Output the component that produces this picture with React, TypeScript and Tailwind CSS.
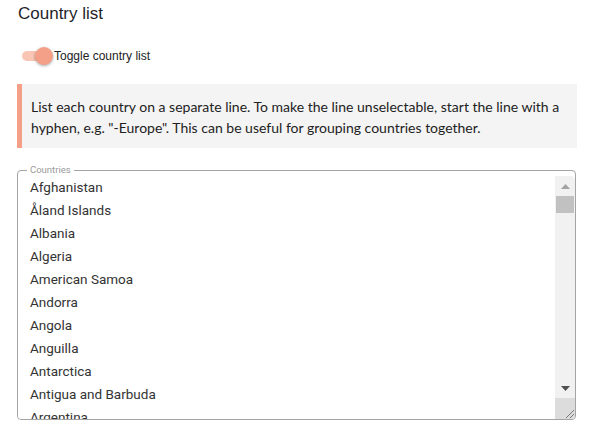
import { useState } from "react";

const COUNTRIES = [
  "Afghanistan", "Åland Islands", "Albania", "Algeria", "American Samoa", "Andorra", "Angola", "Anguilla",
  "Antarctica", "Antigua and Barbuda", "Argentina", "Armenia", "Aruba", "Australia", "Austria", "Azerbaijan",
  "Bahamas", "Bahrain", "Bangladesh", "Barbados", "Belarus", "Belgium", "Belize", "Benin", "Bermuda", "Bhutan",
  "Bolivia", "Bonaire, Sint Eustatius and Saba", "Bosnia and Herzegovina", "Botswana", "Bouvet Island", "Brazil",
  "British Indian Ocean Territory", "Brunei Darussalam", "Bulgaria", "Burkina Faso", "Burundi", "Cabo Verde",
  "Cambodia", "Cameroon", "Canada", "Cayman Islands", "Central African Republic", "Chad", "Chile", "China",
  "Christmas Island", "Cocos (Keeling) Islands", "Colombia", "Comoros", "Congo", "Congo (Democratic Republic)",
  "Cook Islands", "Costa Rica", "Côte d'Ivoire", "Croatia", "Cuba", "Curaçao", "Cyprus", "Czechia", "Denmark",
  "Djibouti", "Dominica", "Dominican Republic", "Ecuador", "Egypt", "El Salvador", "Equatorial Guinea", "Eritrea",
  "Estonia", "Eswatini", "Ethiopia", "Falkland Islands", "Faroe Islands", "Fiji", "Finland", "France",
  "French Guiana", "French Polynesia", "French Southern Territories", "Gabon", "Gambia", "Georgia", "Germany",
  "Ghana", "Gibraltar", "Greece", "Greenland", "Grenada", "Guadeloupe", "Guam", "Guatemala", "Guernsey", "Guinea",
  "Guinea-Bissau", "Guyana", "Haiti", "Heard Island and McDonald Islands", "Holy See", "Honduras", "Hong Kong",
  "Hungary", "Iceland", "India", "Indonesia", "Iran", "Iraq", "Ireland", "Isle of Man", "Israel", "Italy",
  "Jamaica", "Japan", "Jersey", "Jordan", "Kazakhstan", "Kenya", "Kiribati", "Korea (North)", "Korea (South)",
  "Kuwait", "Kyrgyzstan", "Lao People's Democratic Republic", "Latvia", "Lebanon", "Lesotho", "Liberia", "Libya",
  "Liechtenstein", "Lithuania", "Luxembourg", "Macao", "Madagascar", "Malawi", "Malaysia", "Maldives", "Mali",
  "Malta", "Marshall Islands", "Martinique", "Mauritania", "Mauritius", "Mayotte", "Mexico", "Micronesia",
  "Moldova", "Monaco", "Mongolia", "Montenegro", "Montserrat", "Morocco", "Mozambique", "Myanmar", "Namibia",
  "Nauru", "Nepal", "Netherlands", "New Caledonia", "New Zealand", "Nicaragua", "Niger", "Nigeria", "Niue",
  "Norfolk Island", "North Macedonia", "Northern Mariana Islands", "Norway", "Oman", "Pakistan", "Palau",
  "Palestine", "Panama", "Papua New Guinea", "Paraguay", "Peru", "Philippines", "Pitcairn", "Poland", "Portugal",
  "Puerto Rico", "Qatar", "Réunion", "Romania", "Russian Federation", "Rwanda", "Saint Barthélemy",
  "Saint Helena", "Saint Kitts and Nevis", "Saint Lucia", "Saint Martin", "Saint Pierre and Miquelon",
  "Saint Vincent and the Grenadines", "Samoa", "San Marino", "Sao Tome and Principe", "Saudi Arabia", "Senegal",
  "Serbia", "Seychelles", "Sierra Leone", "Singapore", "Sint Maarten", "Slovakia", "Slovenia", "Solomon Islands",
  "Somalia", "South Africa", "South Georgia", "South Sudan", "Spain", "Sri Lanka", "Sudan", "Suriname",
  "Svalbard and Jan Mayen", "Sweden", "Switzerland", "Syrian Arab Republic", "Taiwan", "Tajikistan", "Tanzania",
  "Thailand", "Timor-Leste", "Togo", "Tokelau", "Tonga", "Trinidad and Tobago", "Tunisia", "Turkey",
  "Turkmenistan", "Turks and Caicos Islands", "Tuvalu", "Uganda", "Ukraine", "United Arab Emirates",
  "United Kingdom", "United States", "United States Minor Outlying Islands", "Uruguay", "Uzbekistan", "Vanuatu",
  "Venezuela", "Viet Nam", "Virgin Islands (British)", "Virgin Islands (U.S.)", "Wallis and Futuna",
  "Western Sahara", "Yemen", "Zambia", "Zimbabwe",
];

function Toggle({ on, onChange, label }: { on: boolean; onChange: (v: boolean) => void; label: string }) {
  return (
    <label className="flex items-center h-[18px] cursor-pointer select-none">
      <span className="relative w-[34px] h-[18px] shrink-0" onClick={() => onChange(!on)}>
        <span className={`absolute left-[3px] top-[4px] w-[26px] h-[10px] rounded-full ${on ? "bg-[#f9c6b6]" : "bg-[#d0d0d0]"}`} />
        <span
          className={`absolute top-0 w-[18px] h-[18px] rounded-full shadow-[0_1px_3px_rgba(0,0,0,0.35)] ${
            on ? "left-[16px] bg-[#f4a088]" : "left-0 bg-[#fafafa]"
          }`}
        />
      </span>
      <span className="ml-[1px] text-[12px] text-[#222] font-['Liberation_Sans',Arial,sans-serif]">{label}</span>
    </label>
  );
}

// static classic-looking scrollbar column next to the textarea
function ScrollBar() {
  return (
    <div className="w-[20px] shrink-0 flex flex-col bg-[#f1f1f1]">
      <div className="h-[20px] flex items-center justify-center">
        <svg width="9" height="5" viewBox="0 0 9 5">
          <path d="M0 5 L4.5 0 L9 5 Z" fill="#a3a3a3" />
        </svg>
      </div>
      <div className="h-[17px] mx-[1px] bg-[#c1c1c1]" />
      <div className="flex-1" />
      <div className="h-[20px] flex items-center justify-center">
        <svg width="9" height="5" viewBox="0 0 9 5">
          <path d="M0 0 L9 0 L4.5 5 Z" fill="#505050" />
        </svg>
      </div>
      <div className="h-[21px] bg-[#dcdcdc] flex items-end justify-end">
        <svg width="12" height="12" viewBox="0 0 12 12">
          <path d="M11 3 L3 11 M11 7 L7 11" stroke="#7a7a7a" strokeWidth="1" />
        </svg>
      </div>
    </div>
  );
}

export default function App() {
  const [on, setOn] = useState(true);
  const [text, setText] = useState(COUNTRIES.join("\n"));

  return (
    <div className="w-[602px] h-[434px] bg-white overflow-hidden pl-[18px] pr-[25px] pt-[4px]">
      <h2 className="text-[17px] leading-[20px] text-[#1f1f2b] font-['Liberation_Sans',Arial,sans-serif]">Country list</h2>

      <div className="mt-[23px] ml-[1px]">
        <Toggle on={on} onChange={setOn} label="Toggle country list" />
      </div>

      <div className="mt-[19px] -ml-[1px] bg-[#f4f4f4] border-l-[5px] border-[#f4a088] pl-[9px] pr-[10px] pt-[12px] pb-[10px] text-[14px] leading-[21px] text-[#222] font-['Lato',sans-serif]">
        List each country on a separate line. To make the line unselectable, start the line with a hyphen, e.g.
        "-Europe". This can be useful for grouping countries together.
      </div>

      <fieldset className="mt-[16px] -ml-[1px] w-[559px] border border-[#a4a4a4] rounded-[4px] overflow-hidden">
        <legend className="ml-[9px] px-[3px] text-[9.5px] leading-[12px] text-[#9a9a9a] font-['Roboto',sans-serif]">
          Countries
        </legend>
        <div className="flex h-[243px]">
          <textarea
            value={text}
            onChange={(e) => setText(e.target.value)}
            className="block flex-1 h-full pl-[12px] pt-0 text-[13.5px] leading-[23px] text-[#333] font-['Roboto',sans-serif] outline-none overflow-y-scroll resize-none bg-white [scrollbar-width:none]"
          />
          <ScrollBar />
        </div>
      </fieldset>
    </div>
  );
}
